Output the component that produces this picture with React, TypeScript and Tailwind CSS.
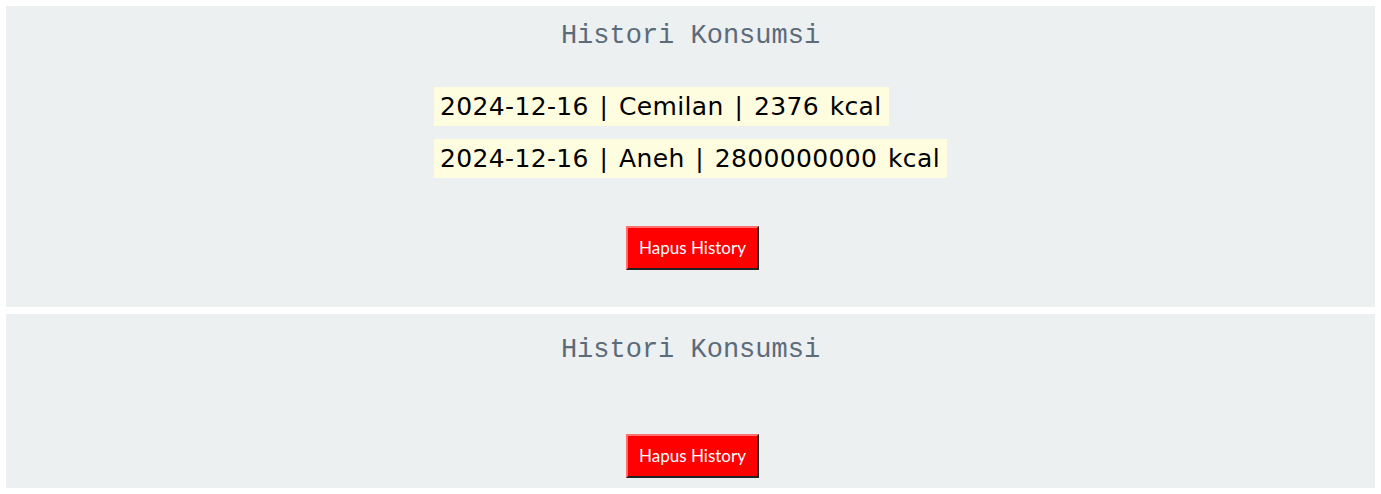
type Entry = { date: string; name: string; kcal: number };

const first: Entry[] = [
  { date: "2024-12-16", name: "Cemilan", kcal: 2376 },
  { date: "2024-12-16", name: "Aneh", kcal: 2800000000 },
];

function HistoryPanel({ entries, top }: { entries: Entry[]; top: string }) {
  return (
    <section className={`bg-[#ecf0f1] flex flex-col items-center ${top}`}>
      <h2 className="text-[27px] leading-[36px] text-[#5c6b7a] font-['Liberation_Mono',monospace]">
        Histori Konsumsi
      </h2>

      {entries.length > 0 ? (
        <ul className="mt-[33px] flex flex-col items-start gap-[13px] font-['DejaVu_Sans',sans-serif] text-[25px] text-black tracking-[0.35px] [word-spacing:2.4px]">
          {entries.map((e, i) => (
            <li key={i} className="h-[39px] leading-[39px] pl-[6px] pr-[7px] bg-[#fffde0]">
              {e.date} | {e.name} | {e.kcal} kcal
            </li>
          ))}
        </ul>
      ) : null}

      <button
        className={`${entries.length > 0 ? "mt-[48px] mb-[37px]" : "mt-[66px] mb-[10px]"} ml-[4px] h-[44px] w-[133px] bg-[#ff0000] text-white text-[17px] font-['Lato',sans-serif] border-2 border-t-[#ff7070] border-l-[#ff7070] border-r-[#222] border-b-[#222]`}
      >
        Hapus History
      </button>
    </section>
  );
}

export default function App() {
  return (
    <div className="bg-white p-[6px] flex flex-col gap-[7px]">
      <HistoryPanel entries={first} top="pt-[12px]" />
      <HistoryPanel entries={[]} top="pt-[18px]" />
    </div>
  );
}
